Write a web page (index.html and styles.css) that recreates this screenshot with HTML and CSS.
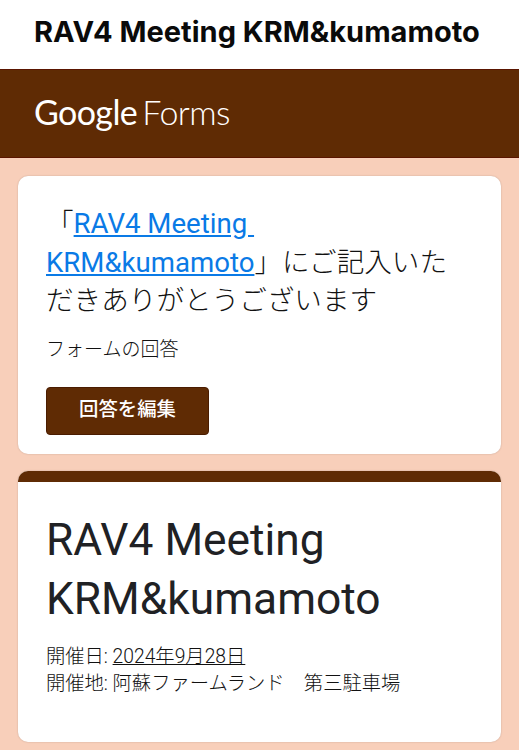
FILE: index.html
```html
<!DOCTYPE html>
<html lang="ja">

<head>
	<meta charset="utf-8">
	<title>RAV4 Meeting KRM&amp;kumamoto</title>
	<link rel="stylesheet" href="styles.css">
</head>

<body>
	<div class="titlebar">RAV4 Meeting KRM&amp;kumamoto</div>
	<div class="banner"><span class="logo">Google <span class="logoProduct">Forms</span></span></div>
	<div class="page">
		<div class="card thanks">
			<p class="thanksText">「<a href="#">RAV4 Meeting&nbsp;<wbr>KRM&amp;kumamoto</a>」にご記入いただきありがとうございます</p>
			<p class="thanksSub">フォームの回答</p>
			<a class="editBtn" href="#">回答を編集</a>
		</div>
		<div class="card info">
			<div class="infoStripe"></div>
			<div class="infoBody">
				<h1>RAV4 Meeting KRM&amp;kumamoto</h1>
				<p class="infoText">開催日: <span class="date">2024年9月28日</span><br>開催地: 阿蘇ファームランド　第三駐車場</p>
			</div>
		</div>
	</div>
</body>

</html>
```

FILE: styles.css
```css
html, body {
	margin: 0;
	padding: 0;
}

body {
	height: 750px;
	overflow: hidden;
	background-color: #f8cfba;
	font-family: Roboto, "Noto Sans CJK JP", sans-serif;
	color: #202124;
}

.titlebar {
	height: 69px;
	box-sizing: border-box;
	padding-left: 34px;
	background-color: #fff;
	color: #0a0a0a;
	font-family: Inter, sans-serif;
	font-size: 29px;
	font-weight: 700;
	line-height: 63px;
	white-space: nowrap;
}

.banner {
	height: 89px;
	box-sizing: border-box;
	padding-left: 34px;
	background-color: #5f2b04;
	border-top: 1px solid #5a1500;
	border-bottom: 1px solid #5a1500;
	color: #fff;
}

.logo {
	font-family: Lato, sans-serif;
	font-size: 34px;
	line-height: 84px;
	letter-spacing: -0.6px;
	word-spacing: -3px;
}

.logoProduct {
	font-weight: 300;
}

.page {
	padding: 18px 18px 0;
}

.card {
	background-color: #fff;
	border-radius: 10px;
	box-shadow: 0 0 2px rgba(0, 0, 0, 0.2);
}

.thanks {
	height: 278px;
	box-sizing: border-box;
	padding: 29px 28px 0;
	margin-bottom: 17px;
}

.thanksText {
	margin: 0;
	color: #111;
	font-size: 27.6px;
	font-weight: 300;
	line-height: 38.5px;
}

.thanksText a {
	color: #0a7ae6;
	font-weight: 400;
}

.thanksSub {
	margin: 15px 0 0;
	color: #111;
	font-size: 19px;
	line-height: 28px;
	font-weight: 300;
}

.editBtn {
	display: block;
	width: 163px;
	height: 48px;
	box-sizing: border-box;
	margin-top: 23px;
	background-color: #5f2b04;
	border: 1px solid #4a1c00;
	border-radius: 4px;
	color: #fff;
	font-size: 19.4px;
	font-weight: 500;
	line-height: 44px;
	text-align: center;
	text-decoration: none;
}

.info {
	height: 271px;
	overflow: hidden;
}

.infoStripe {
	height: 11px;
	background-color: #5f2b04;
}

.infoBody {
	padding: 29px 28px 0;
}

.infoBody h1 {
	margin: 0;
	font-size: 44.3px;
	font-weight: 400;
	line-height: 59px;
}

.infoText {
	margin: 14px 0 0;
	color: #111;
	font-size: 19.3px;
	font-weight: 300;
	line-height: 27px;
}

.date {
	text-decoration: underline;
	text-decoration-thickness: 1px;
}
```
